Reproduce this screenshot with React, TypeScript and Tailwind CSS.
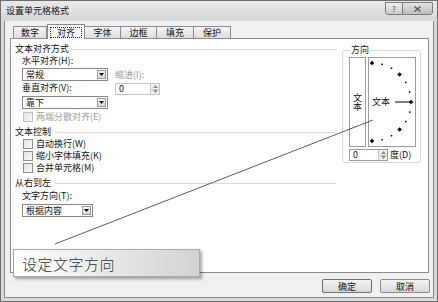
import type { ReactNode } from 'react';

const tabs = [
    { label: '数字', w: 'w-[34px]' },
    { label: '对齐', w: 'w-[38px]', active: true },
    { label: '字体', w: 'w-[36px]' },
    { label: '边框', w: 'w-[36px]' },
    { label: '填充', w: 'w-[37px]' },
    { label: '保护', w: 'w-[37px]' },
];

const SectionHeader = ({ children }: { children: ReactNode }) => (
    <div className="flex h-[12px] items-center">
        <span className="leading-[12px]">{children}</span>
        <span className="ml-[4px] h-px flex-1 bg-[#dcdcdc]" />
    </div>
);

const Select = ({ value, className }: { value: string; className: string }) => (
    <div className={`flex h-[13px] items-stretch border border-[#828790] bg-white ${className}`}>
        <span className="flex-1 pl-[3px] leading-[11px]">{value}</span>
        <span className="m-px flex w-[9px] items-center justify-center border border-[#9a9a9a] bg-gradient-to-b from-[#f4f4f4] to-[#d6d6d6]">
            <svg width="5" height="3" viewBox="0 0 5 3">
                <path d="M0 0h5L2.5 3z" fill="#000" />
            </svg>
        </span>
    </div>
);

const Spinner = ({ className, disabled }: { className: string; disabled?: boolean }) => (
    <div className={`flex h-[12px] items-stretch border bg-white ${disabled ? 'border-[#c4c4c4]' : 'border-[#9a9a9a]'} ${className}`}>
        <span className="flex-1 pl-[3px] leading-[10px]">0</span>
        <span className="flex w-[9px] flex-col border-l border-[#c8c8c8] bg-[#f0f0f0]">
            <span className="flex flex-1 items-center justify-center border-b border-[#c8c8c8]">
                <svg width="5" height="3" viewBox="0 0 5 3">
                    <path d="M0 3h5L2.5 0z" fill="#8a8a8a" />
                </svg>
            </span>
            <span className="flex flex-1 items-center justify-center">
                <svg width="5" height="3" viewBox="0 0 5 3">
                    <path d="M0 0h5L2.5 3z" fill="#8a8a8a" />
                </svg>
            </span>
        </span>
    </div>
);

const Check = ({ label, disabled }: { label: string; disabled?: boolean }) => (
    <div className="flex h-[12px] items-center">
        <span className={`ml-px h-[10px] w-[10px] border bg-gradient-to-br from-[#e4e4e4] to-[#f8f8f8] ${disabled ? 'border-[#c0c0c0]' : 'border-[#8e8f8f]'}`} />
        <span className={`ml-[3px] leading-[12px] ${disabled ? 'text-[#a0a0a0]' : ''}`}>{label}</span>
    </div>
);

const Dial = () => {
    const cx = 3;
    const cy = 44;
    const r = 39;
    const dots = [90, 75, 60, 45, 30, 15, 0, -15, -30, -45, -60, -75, -90].map((deg) => {
        const a = (deg * Math.PI) / 180;
        return { x: cx + r * Math.cos(a), y: cy - r * Math.sin(a), big: deg % 45 === 0 };
    });
    return (
        <div className="relative flex h-[90px] w-[48px] items-center border border-[#9a9a9a] bg-white">
            <svg className="absolute inset-0" width="46" height="88" viewBox="0 0 46 88">
                <line x1="26" y1="44" x2="42" y2="44" stroke="#000" strokeWidth="1" />
                {dots.map((d, i) =>
                    d.big ? (
                        <rect key={i} x={d.x - 1.6} y={d.y - 1.6} width="3.2" height="3.2" fill="#000" transform={`rotate(45 ${d.x} ${d.y})`} />
                    ) : (
                        <rect key={i} x={d.x - 0.75} y={d.y - 0.75} width="1.5" height="1.5" fill="#000" />
                    ),
                )}
            </svg>
            <span className="relative ml-[3px] leading-[10px]">文本</span>
        </div>
    );
};

const App = () => {
    return (
        <div className="relative h-[302px] w-[438px] overflow-hidden border border-[#6e6e6e] bg-[#d8d8d8] font-['Noto_Sans_CJK_SC','Noto_Sans',sans-serif] text-[9px] text-[#111]">
            {/* title bar */}
            <div className="flex h-[20px] items-start justify-between bg-gradient-to-b from-[#eaeaea] to-[#d6d6d6]">
                <span className="pl-[5px] pt-[4px] leading-[12px]">设置单元格格式</span>
                <div className="flex pr-[4px] pt-[1px]">
                    <span className="flex h-[13px] w-[18px] items-center justify-center rounded-bl-[3px] border border-[#7a7a7a] bg-gradient-to-b from-[#f0f0f0] to-[#c9c9c9] text-[8px] leading-none text-[#444]">
                        ?
                    </span>
                    <span className="-ml-px flex h-[13px] w-[31px] items-center justify-center rounded-br-[3px] border border-[#7a7a7a] bg-gradient-to-b from-[#e4e4e4] to-[#bcbcbc]">
                        <svg width="7" height="6" viewBox="0 0 7 6">
                            <path d="M0.5 0.5L6.5 5.5M6.5 0.5L0.5 5.5" stroke="#555" strokeWidth="1.4" />
                        </svg>
                    </span>
                </div>
            </div>

            {/* client */}
            <div className="mx-[3px] flex h-[277px] flex-col border-x border-b border-[#8a8a8a] bg-[#f0f0f0]">
                <div className="flex h-[17px] items-end pl-[8px] pt-[3px]">
                    {tabs.map((t) =>
                        t.active ? (
                            <div key={t.label} className={`relative z-10 -mb-px flex h-[15px] items-center justify-center border-x border-t border-[#898c95] bg-white ${t.w}`}>
                                <span className="border border-dotted border-[#222] px-[6px] leading-[9px]">{t.label}</span>
                            </div>
                        ) : (
                            <div key={t.label} className={`flex h-[12px] items-center justify-center border-t border-r border-[#898c95] bg-gradient-to-b from-[#f4f4f4] to-[#dedede] first:border-l ${t.w}`}>
                                <span className="leading-[10px]">{t.label}</span>
                            </div>
                        ),
                    )}
                </div>

                <div className="ml-[5px] mr-[4px] flex h-[235px] border border-[#898c95] bg-white pl-[4px] pr-[5px]">
                    {/* left column */}
                    <div className="flex w-[321px] flex-col pt-[4px]">
                        <SectionHeader>文本对齐方式</SectionHeader>
                        <div className="flex flex-col pl-[7px]">
                            <span className="leading-[12px]">水平对齐(H):</span>
                            <div className="flex">
                                <div className="flex flex-col">
                                    <Select value="常规" className="mt-px w-[86px]" />
                                    <span className="mt-px leading-[12px]">垂直对齐(V):</span>
                                    <Select value="靠下" className="mt-[2px] w-[86px]" />
                                </div>
                                <div className="ml-[7px] flex flex-col pt-[2px]">
                                    <span className="leading-[12px] text-[#9a9a9a]">缩进(I):</span>
                                    <Spinner className="mt-[2px] w-[45px]" disabled />
                                </div>
                            </div>
                            <div className="mt-[2px]">
                                <Check label="两端分散对齐(E)" disabled />
                            </div>
                        </div>

                        <div className="mt-[3px]">
                            <SectionHeader>文本控制</SectionHeader>
                        </div>
                        <div className="flex flex-col pl-[7px]">
                            <Check label="自动换行(W)" />
                            <Check label="缩小字体填充(K)" />
                            <Check label="合并单元格(M)" />
                        </div>

                        <div className="mt-[3px]">
                            <SectionHeader>从右到左</SectionHeader>
                        </div>
                        <div className="flex flex-col pl-[7px]">
                            <span className="mt-px leading-[12px]">文字方向(T):</span>
                            <Select value="根据内容" className="mt-[2px] w-[71px]" />
                        </div>
                    </div>

                    {/* orientation */}
                    <fieldset className="ml-[6px] mt-[5px] h-[119px] w-[79px] rounded-[3px] border border-[#d5d9de] pl-[6px] pr-[4px]">
                        <legend className="ml-[1px] px-[1px] leading-[12px]">方向</legend>
                        <div className="mt-px flex gap-[2px]">
                            <div className="flex h-[90px] w-[17px] items-center justify-center border border-[#9a9a9a] bg-white">
                                <span className="leading-[11px] [writing-mode:vertical-rl]">文本</span>
                            </div>
                            <Dial />
                        </div>
                        <div className="mt-[2px] flex items-center">
                            <Spinner className="w-[39px]" />
                            <span className="ml-[2px] leading-[12px]">度(D)</span>
                        </div>
                    </fieldset>
                </div>

                <div className="flex justify-end gap-[8px] pr-[3px] pt-[6px]">
                    <button className="flex h-[14px] w-[50px] items-center justify-center rounded-[2px] border border-[#6f6f6f] bg-gradient-to-b from-[#f4f4f4] to-[#d8d8d8] leading-none">
                        确定
                    </button>
                    <button className="flex h-[14px] w-[50px] items-center justify-center rounded-[2px] border border-[#8a8a8a] bg-gradient-to-b from-[#f4f4f4] to-[#d8d8d8] leading-none">
                        取消
                    </button>
                </div>
            </div>

            {/* callout */}
            <svg className="pointer-events-none absolute left-[-1px] top-[-1px]" width="438" height="302" viewBox="0 0 438 302">
                <line x1="55" y1="244" x2="373" y2="120" stroke="#333" strokeWidth="0.8" />
            </svg>
            <div className="absolute left-[12px] top-[248px] flex h-[28px] w-[187px] items-center border border-[#a8a8a8] bg-gradient-to-r from-white to-[#d2d2d2] pl-[8px] shadow-[2px_2px_3px_rgba(0,0,0,0.35)]">
                <span className="text-[15px] font-light leading-none tracking-[0.5px] text-[#333]">设定文字方向</span>
            </div>
        </div>
    );
};

export default App;
